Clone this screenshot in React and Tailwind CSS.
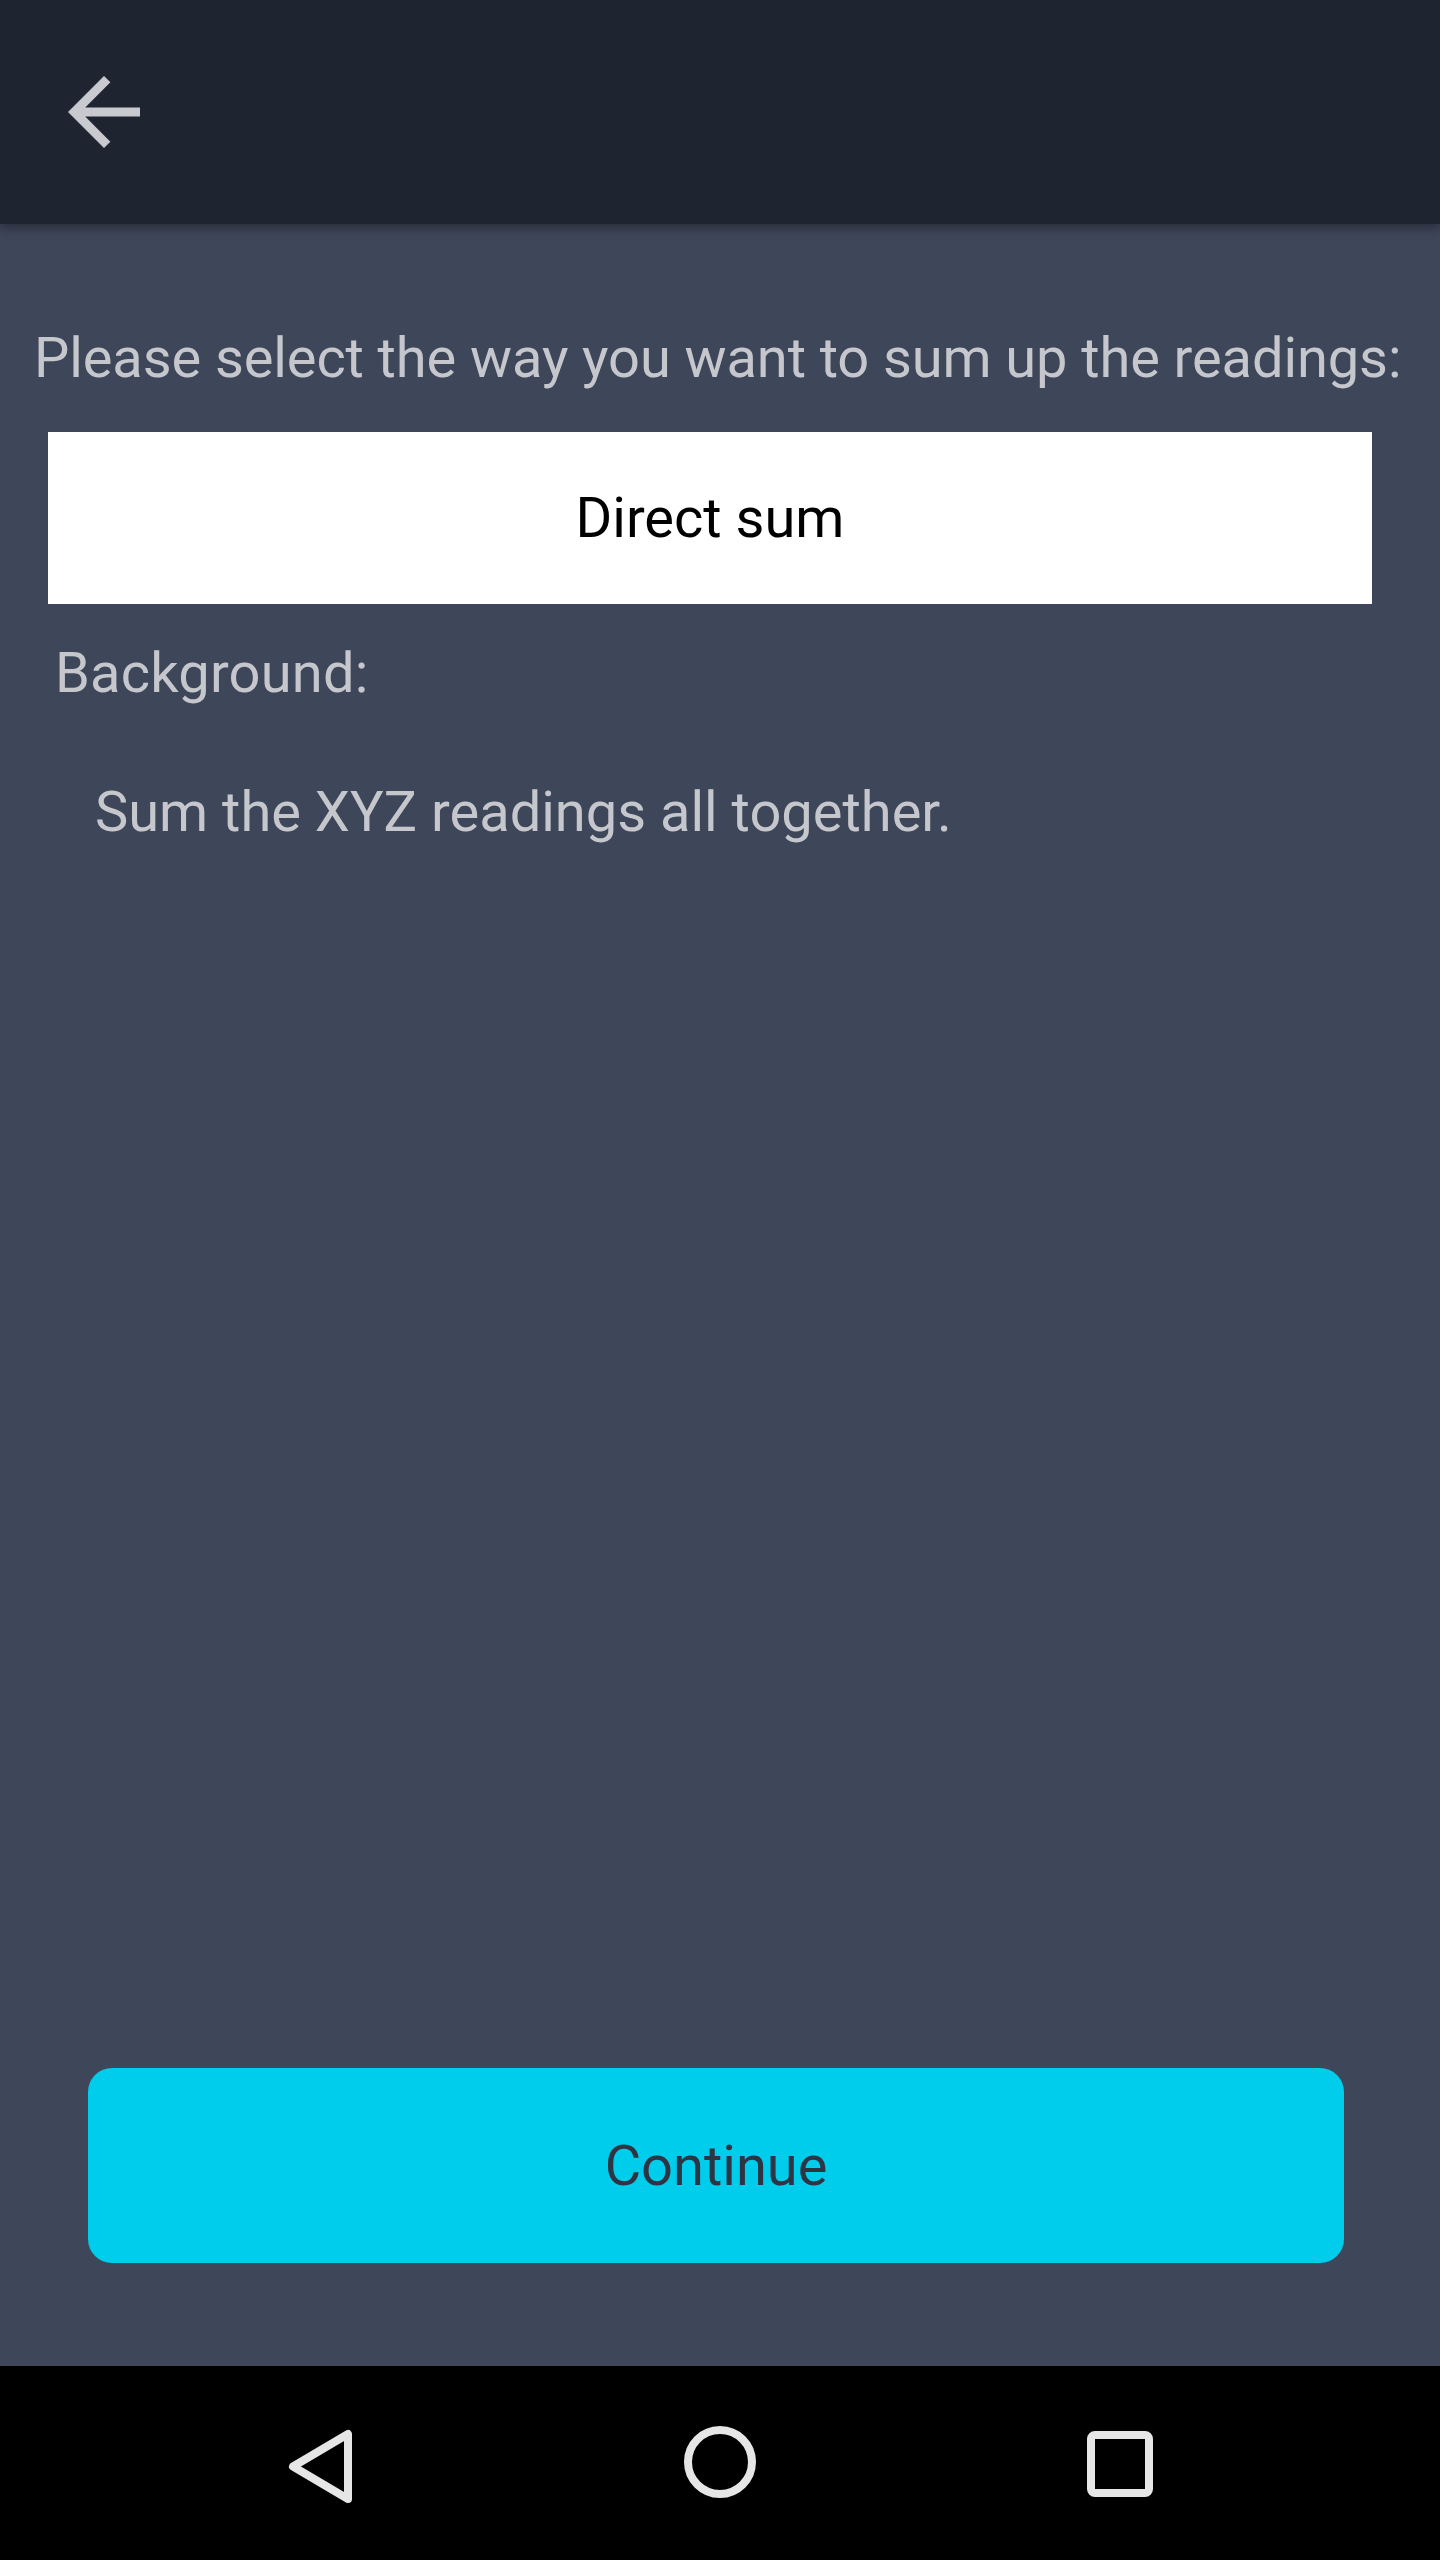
import React from 'react';

const BackArrow = () => (
  <svg width="108" height="108" viewBox="0 0 24 24">
    <path
      d="M20 11H7.83l5.59-5.59L12 4l-8 8 8 8 1.41-1.41L7.83 13H20v-2z"
      fill="#c9cad0"
    />
  </svg>
);

const NavBar = () => (
  <div className="h-[194px] bg-black flex items-center justify-center gap-[280px]">
    <svg width="120" height="120" viewBox="0 0 120 120">
      <polygon
        points="88,31 88,96 33,63.5"
        fill="none"
        stroke="#e6e6e6"
        strokeWidth="8"
        strokeLinejoin="round"
      />
    </svg>
    <svg width="120" height="120" viewBox="0 0 120 120">
      <circle cx="60" cy="59" r="32" fill="none" stroke="#e6e6e6" strokeWidth="8" />
    </svg>
    <svg width="120" height="120" viewBox="0 0 120 120">
      <rect x="31" y="32" width="58" height="58" rx="4" fill="none" stroke="#e6e6e6" strokeWidth="8" />
    </svg>
  </div>
);

const App = () => {
  return (
    <div className="w-[1440px] h-[2560px] flex flex-col bg-[#3e4659] font-['Roboto','Liberation_Sans',sans-serif]">
      {/* Toolbar */}
      <header className="h-[224px] shrink-0 bg-[#1f2431] relative z-10 shadow-[0_4px_10px_rgba(0,0,0,0.35)] pl-[50px] pt-[58px]">
        <BackArrow />
      </header>

      {/* Content */}
      <main className="flex-1 flex flex-col">
        <p className="mt-[101px] pl-[34px] text-[56px] leading-[66px] tracking-[-0.1px] text-[#c5c7cc] whitespace-nowrap">
          Please select the way you want to sum up the readings:
        </p>

        <div className="mt-[41px] ml-[48px] w-[1324px] h-[172px] bg-white flex items-center justify-center text-[56px] text-black">
          Direct sum
        </div>

        <p className="mt-[36px] ml-[55px] text-[56px] leading-[66px] tracking-[0.2px] text-[#c5c7cc]">
          Background:
        </p>

        <p className="mt-[73px] ml-[95px] text-[56px] leading-[66px] text-[#c5c7cc]">
          Sum the XYZ readings all together.
        </p>

        <div className="flex-1" />

        <button className="ml-[88px] mb-[103px] w-[1256px] h-[195px] rounded-[24px] bg-[#00cdec] text-[56px] text-[#2d3443] flex items-center justify-center">
          Continue
        </button>
      </main>

      <NavBar />
    </div>
  );
};

export default App;
